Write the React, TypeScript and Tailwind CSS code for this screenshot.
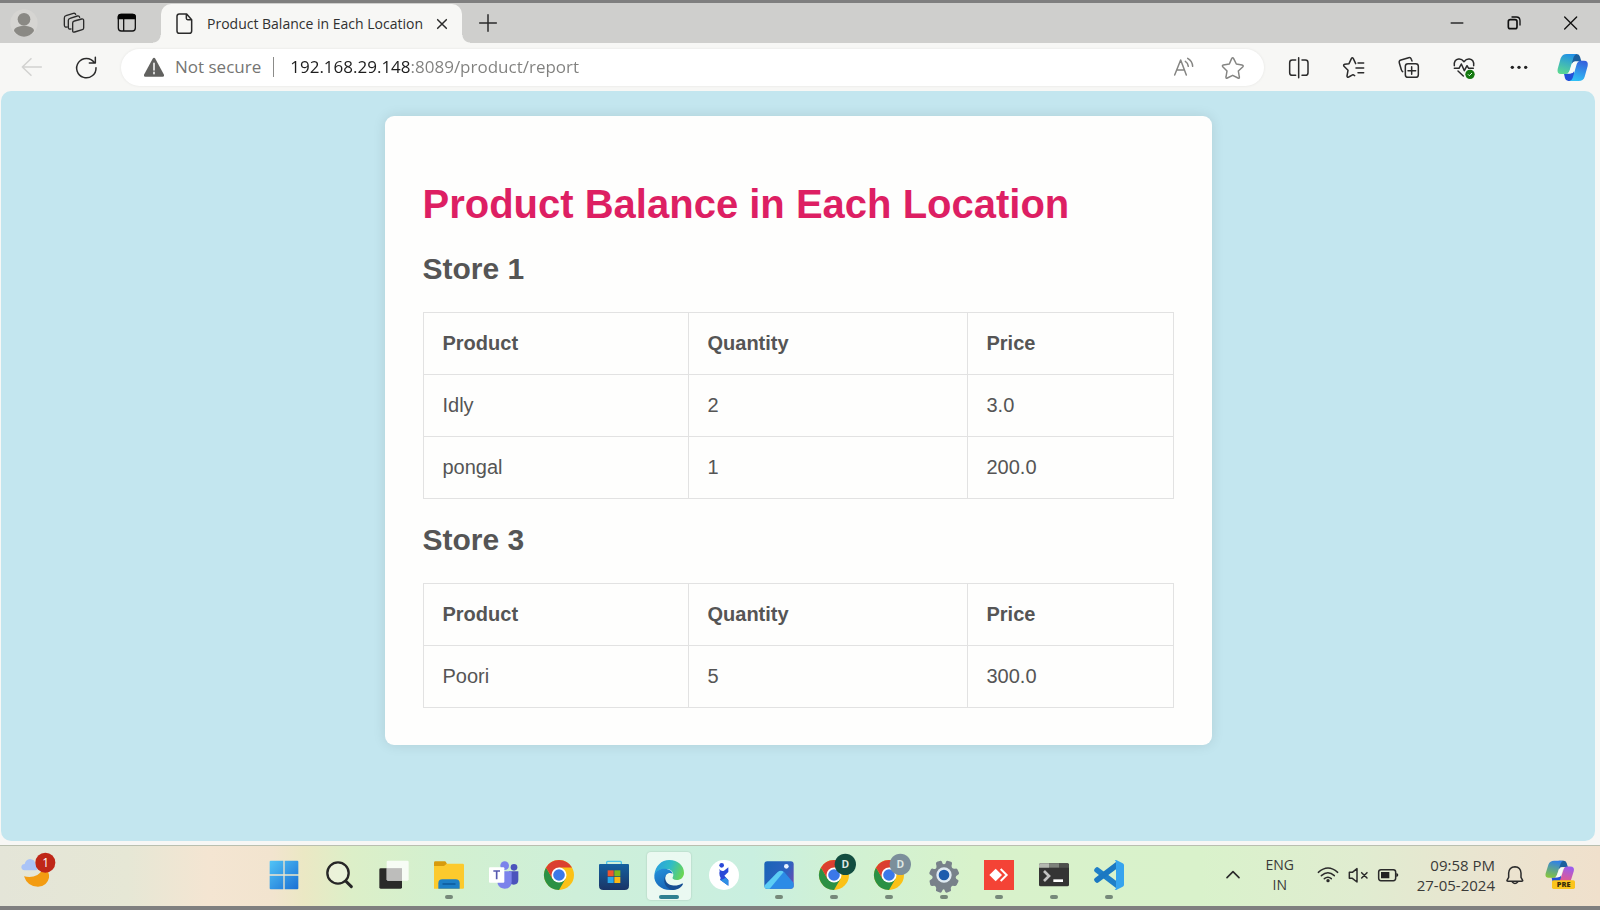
import React from "react";

type IconProps = { box: string; className?: string; children: React.ReactNode };

function Icon({ box, className = "", children }: IconProps) {
  return (
    <svg viewBox={box} className={`shrink-0 overflow-visible ${className}`} fill="none" aria-hidden="true">
      {children}
    </svg>
  );
}

const dark = {
  stroke: "#2b2b2b",
  strokeWidth: 4.5,
  strokeLinecap: "round" as const,
  strokeLinejoin: "round" as const,
};
const soft = { ...dark, stroke: "#858583" };

type Row = { product: string; quantity: string; price: string };
const stores: { name: string; rows: Row[] }[] = [
  {
    name: "Store 1",
    rows: [
      { product: "Idly", quantity: "2", price: "3.0" },
      { product: "pongal", quantity: "1", price: "200.0" },
    ],
  },
  { name: "Store 3", rows: [{ product: "Poori", quantity: "5", price: "300.0" }] },
];

function TitleBar() {
  return (
    <header className="flex h-10 items-center bg-[#cfcfcd] pl-[10px]">
      <button aria-label="Profile">
        <Icon box="30 30 84 84" className="size-7">
          <circle cx="72" cy="72" r="41" fill="#d6d5d2" />
          <circle cx="72" cy="61" r="19" fill="#8a8984" />
          <path d="M42 96c0-10 13-15 30-15s30 5 30 15c-8 11-18 17-30 17s-22-6-30-17z" fill="#8a8984" />
        </Icon>
      </button>
      <button aria-label="Workspaces" className="ml-[25px]">
        <Icon box="189 39 66 66" className="size-[22px]">
          <path
            {...dark}
            strokeWidth={4}
            d="M223 66l22-6q6-1 6 5v22q0 4-4 5l-23 7q-6 2-6-4V72q0-5 5-6zM213 90q-8 2-8-5V64q0-5 5-6l22-7q6-1 7 4M201 84q-8 1-8-6V57q0-6 5-7l22-7q6-1 7 3"
          />
        </Icon>
      </button>
      <button aria-label="Tab actions" className="ml-8">
        <Icon box="351 42 60 60" className="size-5">
          <rect x="355" y="46" width="51" height="50" rx="9" stroke="#151515" strokeWidth="4" />
          <path d="M353 61v-7q0-10 10-10h35q10 0 10 10v7z" fill="#050505" />
          <path d="M371 60v36" stroke="#151515" strokeWidth="4" />
        </Icon>
      </button>
      <div className="relative ml-6 flex h-[39px] w-[301px] items-center self-end rounded-t-[10px] bg-[#f7f7f5] pr-[14px] pl-[14px]">
        <span className="absolute bottom-0 -left-2 size-2 bg-[radial-gradient(circle_at_0_0,transparent_7px,#f7f7f5_8px)]" />
        <span className="absolute -right-2 bottom-0 size-2 bg-[radial-gradient(circle_at_100%_0,transparent_7px,#f7f7f5_8px)]" />
        <Icon box="525 36 57 72" className="h-6 w-[19px]">
          <path {...dark} d="M538 42h22l15 17v34q0 7-7 7h-30q-7 0-7-7V49q0-7 7-7zM559 43v12q0 4 4 4h12" />
        </Icon>
        <span className="ml-[13px] text-[14px] whitespace-nowrap text-[#303030]">Product Balance in Each Location</span>
        <button aria-label="Close tab" className="ml-auto">
          <Icon box="1308 55 36 36" className="size-3">
            <path {...dark} d="M1313 60l26 26M1339 60l-26 26" />
          </Icon>
        </button>
      </div>
      <button aria-label="New tab" className="ml-4">
        <Icon box="1435 40 60 60" className="size-5">
          <path {...dark} d="M1440 70h50M1465 45v50" />
        </Icon>
      </button>
      <div className="mr-px ml-auto flex self-stretch">
        <button aria-label="Minimize" className="grid w-[57px] place-items-center">
          <Icon box="924 48 48 48" className="size-4">
            <path {...dark} strokeLinecap="butt" d="M929 72h38" />
          </Icon>
        </button>
        <button aria-label="Restore" className="grid w-[57px] place-items-center">
          <Icon box="1096 48 48 48" className="size-4">
            <rect x="1103" y="62" width="26" height="27" rx="6" stroke="#111" strokeWidth="5" />
            <path d="M1114 54h13q11 0 11 11v13" stroke="#111" strokeWidth="4" strokeLinecap="round" />
          </Icon>
        </button>
        <button aria-label="Close" className="grid w-[57px] place-items-center">
          <Icon box="1270 48 48 48" className="size-4">
            <path stroke="#111" strokeWidth="4" strokeLinecap="round" d="M1275 54l36 36M1311 54l-36 36" />
          </Icon>
        </button>
      </div>
    </header>
  );
}

function CopilotShape({ id, tones }: { id: string; tones: [string, string, string, string] }) {
  return (
    <>
      <defs>
        <linearGradient id={`${id}a`} x1="0.6" y1="0" x2="0.3" y2="1">
          <stop offset="0" stopColor={tones[0]} />
          <stop offset="1" stopColor={tones[1]} />
        </linearGradient>
        <linearGradient id={`${id}b`} x1="0.7" y1="0" x2="0.4" y2="1">
          <stop offset="0" stopColor={tones[2]} />
          <stop offset="1" stopColor={tones[3]} />
        </linearGradient>
      </defs>
      <path d="M44 3h15q8 0 10 8l4 14H54q-6 0-9 8l-5-10z" fill="#1b5f9e" />
      <path d="M50 84H34q-8 0-10-8l-3-14h16q8 0 11-9l5 10z" fill="#2350d8" />
      <path d="M29 3h31q-7 1-10 9L38 52q-3 11-12 11H12Q-1 63 2 48l9-32Q16 3 29 3z" fill={`url(#${id}a)`} />
      <path d="M65 84H37q7-1 10-9l12-41q3-11 12-11h10q14 0 11 16l-9 32q-4 13-18 13z" fill={`url(#${id}b)`} />
      <path d="M50 27h12q-4 3-6 10l-4 15q-3 9-10 9h-9q4-3 6-9l5-16q2-7 6-9z" fill="#f5faf8" />
    </>
  );
}

function Toolbar() {
  return (
    <nav className="flex h-12 items-center bg-[#f7f7f5]">
      <button aria-label="Back" className="ml-[21px]" disabled>
        <Icon box="63 168 66 66" className="size-[22px]">
          <path {...dark} stroke="#d2d2d0" d="M124 201H67M93 176l-26 25 26 25" />
        </Icon>
      </button>
      <button aria-label="Refresh" className="ml-8">
        <Icon box="226 168 66 66" className="size-[22px]">
          <path {...dark} d="M289 203A29 29 0 1 1 284 188M287 172v17h-18" />
        </Icon>
      </button>
      <div className="ml-6 flex h-[37px] min-w-0 flex-1 items-center rounded-full bg-white pr-5 pl-[22px] shadow-[0_0_3px_rgba(0,0,0,0.08)]">
        <Icon box="429 168 66 66" className="size-[22px]">
          <path d="M458 176q4-6 8 0l26 48q2 6-4 6h-52q-6 0-4-6z" fill="#61615f" />
          <path d="M462 190v20M462 217v4" stroke="#fff" strokeWidth="4.5" strokeLinecap="round" />
        </Icon>
        <span className="ml-[10px] text-[17px] whitespace-nowrap text-[#757573]">Not secure</span>
        <span className="ml-3 h-5 w-px bg-[#8b8b89]" />
        <input
          aria-label="Address"
          defaultValue="192.168.29.148:8089/product/report"
          className="ml-4 min-w-0 flex-1 bg-[linear-gradient(90deg,#1d1d1d_121px,#80807e_121px)] bg-clip-text text-[17px] text-transparent outline-none"
        />
        <button aria-label="Read aloud">
          <Icon box="99 168 66 66" className="size-[22px]">
            <path {...soft} d="M104 225l18-45 17 45M110 210h23M136 184q8 5 9 15M143 175q14 8 15 24" />
          </Icon>
        </button>
        <button aria-label="Add to favorites" className="ml-[27px]">
          <Icon box="246 168 66 66" className="size-[22px]">
            <path
              {...soft}
              d="M275 176q3-5 6 0l8 16 17 3q6 1 2 6l-13 12 3 18q1 5-4 3l-16-8-16 8q-5 2-4-3l3-18-12-12q-4-5 1-6l18-3z"
            />
          </Icon>
        </button>
      </div>
      <div className="mr-px ml-[7px] flex items-center">
        <button aria-label="Split screen" className="grid w-[55px] place-items-center">
          <Icon box="444 168 66 66" className="size-[22px]">
            <path
              {...dark}
              d="M467 180h-10q-8 0-8 8v30q0 8 8 8h10M486 180h10q8 0 8 8v30q0 8-8 8h-10M476 173v60"
            />
          </Icon>
        </button>
        <button aria-label="Favorites" className="grid w-[55px] place-items-center">
          <Icon box="612 168 66 66" className="size-[22px]">
            <path
              {...dark}
              d="M657 189h17M651 204h23M657 218h17M650 191l-7-15q-3-5-6 0l-7 15-13 2q-5 1-2 6l12 12-3 17q0 5 5 3l13-7 5 3"
            />
          </Icon>
        </button>
        <button aria-label="Collections" className="grid w-[55px] place-items-center">
          <Icon box="777 168 66 66" className="size-[22px]">
            <rect {...dark} x="799" y="191" width="39" height="41" rx="8" />
            <path {...dark} d="M818 200v23M807 212h23M791 215q-3-2-4-6l-6-20q-2-7 5-9l23-7q6-1 8 5l2 5" />
          </Icon>
        </button>
        <button aria-label="Browser essentials" className="grid w-[55px] place-items-center">
          <Icon box="941 168 66 66" className="size-[22px]">
            <path
              {...dark}
              d="M945 197q-2-18 13-20 9-1 16 8 7-9 16-8 15 2 13 20M945 205h14l7-13 9 20 8-15 5 8h14M956 213l16 15"
            />
            <circle cx="992" cy="223" r="14" fill="#14780f" />
            <path d="M986 223l4 4 8-8" stroke="#e8ffe8" strokeWidth="3" />
          </Icon>
        </button>
        <button aria-label="Settings and more" className="grid w-[55px] place-items-center">
          <Icon box="1106 168 66 66" className="size-[22px]">
            <circle cx="1119" cy="202" r="5" fill="#222" />
            <circle cx="1139" cy="202" r="5" fill="#222" />
            <circle cx="1159" cy="202" r="5" fill="#222" />
          </Icon>
        </button>
        <button aria-label="Copilot" className="grid w-[53px] place-items-center">
          <Icon box="0 0 93 87" className="h-[29px] w-[31px]">
            <CopilotShape id="cp" tones={["#2191e6", "#5bd892", "#3560dc", "#2fc0f5"]} />
          </Icon>
        </button>
      </div>
    </nav>
  );
}

function StoreTable({ name, rows }: { name: string; rows: Row[] }) {
  const cell = "border border-[#e2e2e2] px-[19px] py-[19px] text-left";
  return (
    <section className="mt-6">
      <h2 className="text-[30px] leading-[34px] font-bold">{name}</h2>
      <table className="mt-[26px] w-full table-fixed border-collapse text-[20px] leading-[23px]">
        <thead>
          <tr>
            <th className={`w-[265px] ${cell}`}>Product</th>
            <th className={`w-[279px] ${cell}`}>Quantity</th>
            <th className={cell}>Price</th>
          </tr>
        </thead>
        <tbody>
          {rows.map((r) => (
            <tr key={r.product}>
              <td className={cell}>{r.product}</td>
              <td className={cell}>{r.quantity}</td>
              <td className={cell}>{r.price}</td>
            </tr>
          ))}
        </tbody>
      </table>
    </section>
  );
}

function ChromeIcon({ badge }: { badge?: string }) {
  return (
    <Icon box="0 0 90 90" className="size-[30px]">
      <circle cx="45" cy="45" r="45" fill="#fbc116" />
      <path d="M6 22.500A45 45 0 0 0 45 90L64.500 56.250 45 45 25.500 56.250z" fill="#2b9144" />
      <path d="M6 22.500A45 45 0 0 1 84 22.500H45L25.500 56.250z" fill="#db3f30" />
      <circle cx="45" cy="45" r="22.500" fill="#fff" />
      <circle cx="45" cy="45" r="17.500" fill="#3b78e8" />
      {badge && (
        <>
          <circle cx="79" cy="13" r="32" fill={badge} />
          <text x="79" y="24" textAnchor="middle" fontSize="31" fill="#dfe8e4" fontWeight="700">
            D
          </text>
        </>
      )}
    </Icon>
  );
}

const apps: { name: string; state?: "open" | "active"; icon: React.ReactNode }[] = [
  {
    name: "Start",
    icon: (
      <Icon box="0 0 90 90" className="size-[30px]">
        <defs>
          <linearGradient id="win" x1="0" y1="0" x2="1" y2="1">
            <stop offset="0" stopColor="#52c4f6" />
            <stop offset="1" stopColor="#1a6fd4" />
          </linearGradient>
        </defs>
        <path
          d="M5 2h38v41H2V5q0-3 3-3zM47 2h38q3 0 3 3v38H47zM2 47h41v41H5q-3 0-3-3zM47 47h41v38q0 3-3 3H47z"
          fill="url(#win)"
        />
      </Icon>
    ),
  },
  {
    name: "Search",
    icon: (
      <Icon box="0 0 90 90" className="size-[30px]">
        <circle cx="42" cy="39" r="32" stroke="#262626" strokeWidth="7" fill="#ffffff55" />
        <path d="M65 63l17 17" stroke="#262626" strokeWidth="9" strokeLinecap="round" />
      </Icon>
    ),
  },
  {
    name: "Task view",
    icon: (
      <Icon box="0 0 90 90" className="size-[30px]">
        <rect x="1" y="25" width="68" height="61" rx="4" fill="#2a2a29" />
        <rect x="23" y="2" width="66" height="60" rx="4" fill="#fff" fillOpacity="0.8" />
        <path d="M23 25h46v37H27q-4 0-4-4z" fill="#bdbdbb" />
      </Icon>
    ),
  },
  {
    name: "File Explorer",
    state: "open",
    icon: (
      <Icon box="0 0 90 90" className="size-[30px]">
        <path d="M0 8q0-4 4-4h28q3 0 5 4l4 8-6 6H0z" fill="#d79b0c" />
        <path d="M0 18h30l8-7h48q4 0 4 4v68q0 3-3 3H0z" fill="#fcca2d" />
        <path d="M13 86V70q0-12 12-12h40q12 0 12 12v16z" fill="#1d7fc6" />
        <path d="M27 72h36" stroke="#0d599c" strokeWidth="4" strokeLinecap="round" />
      </Icon>
    ),
  },
  {
    name: "Teams",
    icon: (
      <Icon box="0 0 90 90" className="size-[30px]">
        <circle cx="75" cy="22" r="10" fill="#4b53bc" />
        <circle cx="47" cy="17" r="13" fill="#7b83eb" />
        <path d="M60 34h28v26q0 14-14 14-10 0-14-8z" fill="#4b53bc" />
        <path d="M26 34h42v30q0 22-21 22-15 0-21-14z" fill="#7b83eb" />
        <rect x="0" y="22" width="46" height="46" rx="3" fill="#fff" />
        <path d="M13 33h20M23 34v24" stroke="#5558af" strokeWidth="5" />
      </Icon>
    ),
  },
  { name: "Google Chrome", icon: <ChromeIcon /> },
  {
    name: "Microsoft Store",
    icon: (
      <Icon box="0 0 90 90" className="size-[30px]">
        <defs>
          <linearGradient id="store" x1="0" y1="0" x2="0" y2="1">
            <stop offset="0" stopColor="#14609f" />
            <stop offset="1" stopColor="#1a3566" />
          </linearGradient>
        </defs>
        <path d="M23 16V7q0-3 3-3h38q3 0 3 3v9" stroke="#4fc3e8" strokeWidth="4" />
        <path d="M3 12h84q3 0 3 3v62q0 13-13 13H13Q0 90 0 77V15q0-3 3-3z" fill="url(#store)" />
        <path d="M26 31h18v18H26z" fill="#f1552c" />
        <path d="M46 31h18v18H46z" fill="#7fba1c" />
        <path d="M26 51h18v18H26z" fill="#2aa7ea" />
        <path d="M46 51h18v18H46z" fill="#fdb913" />
      </Icon>
    ),
  },
  {
    name: "Microsoft Edge",
    state: "active",
    icon: (
      <Icon box="0 0 90 90" className="size-[30px]">
        <defs>
          <linearGradient id="edgeTop" x1="0" y1="0.3" x2="1" y2="0.6">
            <stop offset="0" stopColor="#2b9fe0" />
            <stop offset="0.5" stopColor="#30bcc6" />
            <stop offset="1" stopColor="#6bd653" />
          </linearGradient>
          <linearGradient id="edgeLeft" x1="0" y1="0" x2="0.4" y2="1">
            <stop offset="0" stopColor="#2492dc" />
            <stop offset="1" stopColor="#1767b8" />
          </linearGradient>
        </defs>
        <path
          d="M1 45C4 18 22 0 46 0c26 0 44 18 44 38 0 14-10 22-22 22-10 0-14-4-12-8 4-5 4-22-16-25C22 26 7 32 1 45z"
          fill="url(#edgeTop)"
        />
        <path d="M1 45C7 29 24 25 38 27c10 2 17 8 18 14-12-6-24 3-23 17 1 16 12 28 27 31C28 95-2 75 1 45z" fill="url(#edgeLeft)" />
        <path d="M38 41c-10 13-2 32 16 35 12 2 22-1 29-5 3-2 5 0 3 3-6 10-18 16-31 16C34 86 22 60 38 41z" fill="#164e93" />
      </Icon>
    ),
  },
  {
    name: "Keka",
    icon: (
      <Icon box="0 0 90 90" className="size-[30px]">
        <circle cx="45" cy="45" r="45" fill="#fff" />
        <circle cx="38" cy="16" r="7" fill="#2a48d8" />
        <path d="M30 27q8 9 15 5l13-10v14L46 47l12 13v17L33 59q4-6-1-12l-1-8q3-6-1-12z" fill="#2a48d8" />
        <path d="M34 60l24 17V61L50 53q-8 6-16 7z" fill="#2f8fe4" />
      </Icon>
    ),
  },
  {
    name: "Photos",
    state: "open",
    icon: (
      <Icon box="0 0 90 90" className="size-[30px]">
        <defs>
          <linearGradient id="photo" x1="0" y1="0.3" x2="1" y2="0.7">
            <stop offset="0" stopColor="#1b63b8" />
            <stop offset="0.7" stopColor="#2e62c0" />
            <stop offset="1" stopColor="#6a4bb0" />
          </linearGradient>
          <clipPath id="photoClip">
            <rect x="1" y="4" width="88" height="82" rx="9" />
          </clipPath>
        </defs>
        <g clipPath="url(#photoClip)">
          <path d="M0 0h90v90H0z" fill="url(#photo)" />
          <path d="M0 86l45-49q8-8 16 0l29 33v20H0z" fill="#2c8be6" />
          <path d="M0 78l41-42q10-8 18 0L14 90H0z" fill="#5ccdf5" />
        </g>
        <circle cx="67" cy="19" r="7" fill="#e8f2ff" />
      </Icon>
    ),
  },
  { name: "Chrome profile 1", state: "open", icon: <ChromeIcon badge="#124d40" /> },
  { name: "Chrome profile 2", state: "open", icon: <ChromeIcon badge="#7b8f9b" /> },
  {
    name: "Settings",
    state: "open",
    icon: (
      <Icon box="0 0 90 90" className="size-[30px]">
        <path
          d="M24 5l11-3q3 0 4 4 1 7 6 7t6-7q1-4 4-4l11 3q4 2 3 6-3 8 0 12t10 3q4-1 6 2l5 10q1 4-3 6-7 3-7 8t6 7q4 2 2 6l-5 10q-2 4-7 3-7-2-9 2-3 3-1 9 1 4-2 5l-11 4q-4 0-5-4-1-6-4-6t-5 6q-1 4-5 4l-11-4q-3-1-2-5 2-6-1-9-2-4-9-2-5 1-7-3L2 66q-2-4 2-6 7-3 7-8t-6-7q-5-3-4-7l5-10q2-3 6-2 8 2 10-2t-1-12q-1-5 3-7z"
          fill="#78818a"
        />
        <circle cx="45" cy="45" r="23" fill="#dfeaf2" />
        <circle cx="45" cy="45" r="16" fill="#1c5cad" />
      </Icon>
    ),
  },
  {
    name: "AnyDesk",
    state: "open",
    icon: (
      <Icon box="0 0 90 90" className="size-[30px]">
        <path d="M0 0h90v90H0z" fill="#f44336" />
        <path d="M35 26l19 19-19 19-19-19z" fill="#fff" />
        <path d="M50 27l18 18-18 18" stroke="#fff" strokeWidth="6" />
      </Icon>
    ),
  },
  {
    name: "Terminal",
    state: "open",
    icon: (
      <Icon box="0 0 90 90" className="size-[30px]">
        <rect x="0" y="10" width="90" height="69" rx="5" fill="#343434" />
        <path d="M0 23v-8q0-5 5-5h25v13z" fill="#b4b8b0" />
        <path d="M30 10h30v13H30z" fill="#7d817b" />
        <path d="M60 10h25q5 0 5 5v8H60z" fill="#4e504d" />
        <path d="M15 33l15 15-15 15" stroke="#c4c4c4" strokeWidth="8" />
        <path d="M43 62h29" stroke="#fff" strokeWidth="8" />
      </Icon>
    ),
  },
  {
    name: "Visual Studio Code",
    state: "open",
    icon: (
      <Icon box="0 0 90 90" className="size-[30px]">
        <path d="M5 23q4-4 9 0l53 40v22L2 35q-4-5 0-9z" fill="#1f7fc8" />
        <path d="M5 67q4 4 9 0l53-40V5L2 55q-4 5 0 9z" fill="#1b78c2" />
        <path d="M62 1q3-2 6 0l18 9q4 2 4 6v58q0 4-4 6l-18 9q-3 2-6 0 4-1 4-6V7q0-5-4-6z" fill="#36a4ee" />
      </Icon>
    ),
  },
];

function Taskbar() {
  return (
    <footer className="flex h-[61px] items-start border-t border-[#b9bfb0] bg-[linear-gradient(90deg,#e4e5d8_0%,#e6e7d5_8%,#f4e5d2_13%,#f2e4cf_17%,#ebe8c4_19%,#dcefc8_22%,#d2f0d0_28%,#ceefd9_36%,#c9efe0_47%,#d1f1d3_53%,#d8f2cb_61%,#d9f2cb_75%,#e0ecd0_85%,#eae4d0_93%,#f0e0cc_100%)] pt-[6px]">
      <button aria-label="Weather" className="ml-5 size-9">
        <Icon box="60 70 108 108" className="size-9">
          <path d="M72 143q22 6 40-4 16-10 19-26 18 16 16 34-5 25-33 27-32 0-42-31z" fill="#f39c12" />
          <path d="M74 125q-10-1-10-10 1-9 10-9 3-14 16-15 14 1 16 14 9 0 9 10 0 9-9 10z" fill="#aac4f7" />
          <circle cx="136" cy="102" r="30" fill="#bf2718" />
          <text x="137" y="114" textAnchor="middle" fontSize="36" fill="#fff">
            1
          </text>
        </Icon>
      </button>
      <div className="ml-[206px] flex gap-[11px]">
        {apps.map((a) => (
          <button
            key={a.name}
            aria-label={a.name}
            className={`flex h-12 w-11 flex-col items-center gap-[5px] rounded-[4px] pt-2 ${
              a.state === "active" ? "bg-white/60 shadow-[0_0_2px_rgba(0,0,0,0.2)]" : ""
            }`}
          >
            {a.icon}
            {a.state === "open" && <span className="h-1 w-2 rounded-full bg-[#76897a]" />}
            {a.state === "active" && <span className="h-1 w-5 rounded-full bg-[#2f8191]" />}
          </button>
        ))}
      </div>
      <div className="ml-auto flex h-[46px] items-center text-[15px] leading-5 text-[#3a3a38]">
        <button aria-label="Show hidden icons">
          <Icon box="72 114 48 48" className="size-4">
            <path {...dark} strokeWidth={5} d="M78 146l18-18 18 18" />
          </Icon>
        </button>
        <button className="ml-[24px] w-[30px] text-center text-[14px] leading-5 whitespace-nowrap">
          ENG
          <br />
          IN
        </button>
        <button aria-label="Network, volume and battery" className="ml-[22px] flex items-center gap-[9px]">
          <Icon box="348 105 66 60" className="h-5 w-[22px]">
            <path {...dark} d="M352 127q29-26 58 0M361 137q20-17 39 0M370 146q11-9 21 0" />
            <circle cx="381" cy="152" r="5" fill="#2b2b2b" />
          </Icon>
          <Icon box="438 105 60 60" className="size-5">
            <path {...dark} d="M442 127h9l14-11v40l-14-11h-9zM479 128l16 16M495 128l-16 16" />
          </Icon>
          <Icon box="528 105 66 60" className="h-5 w-[22px]">
            <rect {...dark} x="533" y="119" width="51" height="33" rx="7" />
            <path d="M540 126h25v19h-25zM586 129q6 1 6 6t-6 6z" fill="#222" />
          </Icon>
        </button>
        <button className="ml-[18px] text-right whitespace-nowrap">
          09:58 PM
          <br />
          27-05-2024
        </button>
        <button aria-label="Notifications" className="ml-[11px]">
          <Icon box="918 105 54 60" className="h-5 w-[18px]">
            <path
              {...dark}
              d="M945 110q17 1 18 19v13l5 9q1 3-3 3h-41q-4 0-3-3l5-9v-13q1-18 19-19zM937 156q8 9 16 0"
            />
          </Icon>
        </button>
        <button aria-label="Copilot preview" className="mr-[25px] ml-[21px]">
          <Icon box="0 0 90 90" className="size-[30px]">
            <g transform="scale(.94 .85)">
              <CopilotShape id="pre" tones={["#2f80e8", "#86c53e", "#9a5cf0", "#f0587c"]} />
            </g>
            <rect x="21" y="61" width="69" height="26" rx="5" fill="#fbc41d" />
            <text x="56" y="82" textAnchor="middle" fontSize="22" fontWeight="800" fill="#3a2c08">
              PRE
            </text>
          </Icon>
        </button>
      </div>
    </footer>
  );
}

export default function App() {
  return (
    <div className="flex min-h-screen flex-col border-t-[3px] border-b-4 border-[#7f7f7f] bg-[#f7f7f5] font-['Open_Sans','Noto_Sans',sans-serif]">
      <TitleBar />
      <Toolbar />
      <main className="mr-[5px] mb-1 ml-px flex-1 rounded-[10px] bg-[#c3e6ef] px-4 py-[25px] font-['Liberation_Sans',Arial,sans-serif] text-[#555555]">
        <div className="mx-auto w-full max-w-[827px] rounded-[9px] bg-[#fefefd] px-[38px] pt-16 pb-[37px] shadow-[0_0_13px_rgba(0,0,0,0.1)]">
          <h1 className="text-[40px] leading-[48px] font-bold text-[#dd1f63]">Product Balance in Each Location</h1>
          {stores.map((s) => (
            <StoreTable key={s.name} {...s} />
          ))}
        </div>
      </main>
      <Taskbar />
    </div>
  );
}
